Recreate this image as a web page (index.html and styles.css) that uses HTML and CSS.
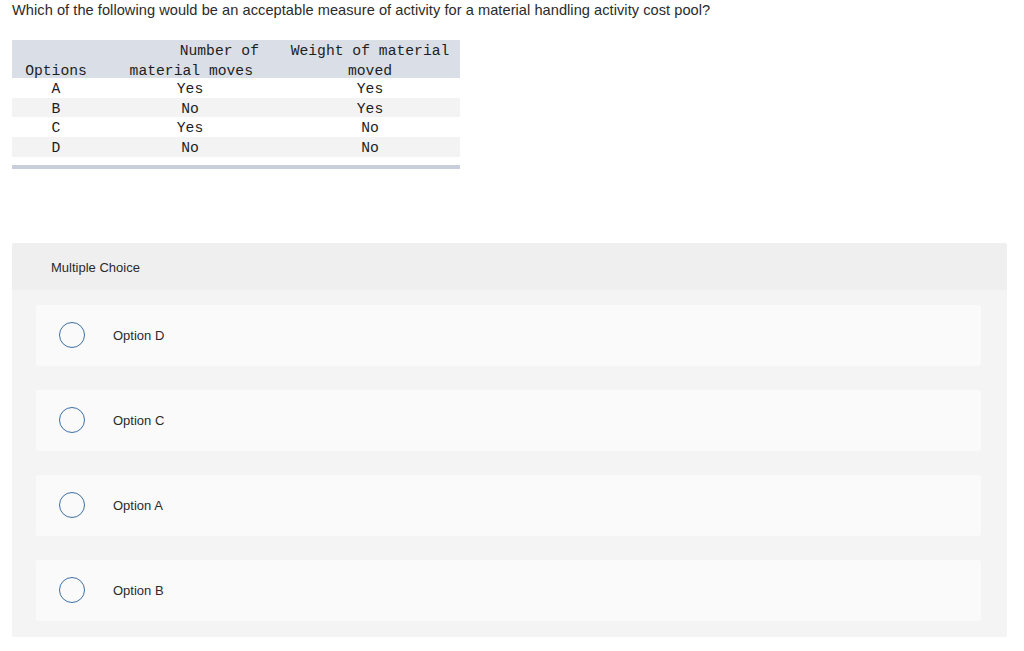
FILE: index.html
```html
<!DOCTYPE html>
<html lang="en">
<head>
<meta charset="utf-8">
<title>Question</title>
<link rel="stylesheet" href="styles.css">
</head>
<body>
<div class="page">
  <p class="question">Which of the following would be an acceptable measure of activity for a material handling activity cost pool?</p>

  <div class="table-wrap">
    <table class="data">
      <colgroup>
        <col class="w1">
        <col class="w2">
        <col class="w3">
      </colgroup>
      <thead>
        <tr>
          <th class="c1"><span class="l2">Options</span></th>
          <th class="c2"><span class="l1">Number of</span><span class="l2">material moves</span></th>
          <th class="c3"><span class="l1">Weight of material</span><span class="l2">moved</span></th>
        </tr>
      </thead>
      <tbody>
        <tr><td>A</td><td>Yes</td><td>Yes</td></tr>
        <tr class="alt"><td>B</td><td>No</td><td>Yes</td></tr>
        <tr><td>C</td><td>Yes</td><td>No</td></tr>
        <tr class="alt"><td>D</td><td>No</td><td>No</td></tr>
      </tbody>
    </table>
    <div class="table-bar"></div>
  </div>

  <section class="mc">
    <header class="mc-head">Multiple Choice</header>
    <div class="mc-body">
      <label class="choice"><span class="radio"></span><span class="choice-text">Option D</span></label>
      <label class="choice"><span class="radio"></span><span class="choice-text">Option C</span></label>
      <label class="choice"><span class="radio"></span><span class="choice-text">Option A</span></label>
      <label class="choice"><span class="radio"></span><span class="choice-text">Option B</span></label>
    </div>
  </section>
</div>
</body>
</html>
```

FILE: styles.css
```css
html, body {
  margin: 0;
  padding: 0;
  background: #ffffff;
}

.page {
  padding: 1px 17px 0 12px;
  font-family: "Liberation Sans", Arial, sans-serif;
  color: #2b2b2b;
}

.question {
  margin: 0;
  font-size: 14.6px;
  line-height: 18px;
  letter-spacing: 0.05px;
}

.table-wrap {
  width: 448px;
  margin-top: 21px;
}

.data {
  width: 448px;
  border-collapse: collapse;
  font-family: "Liberation Mono", "Courier New", monospace;
  font-size: 14.7px;
  color: #1e1e1e;
  table-layout: fixed;
}

.data .w1 { width: 88px; }
.data .w2 { width: 180px; }
.data .w3 { width: 180px; }

.data th {
  background: #d9dee7;
  font-weight: normal;
  line-height: 14px;
  height: 38px;
  padding: 4px 0 0 0;
  box-sizing: border-box;
  vertical-align: bottom;
}

.data th span { display: block; }
.data th .l1 { margin-bottom: 6px; }

.data .c1 { text-align: center; }
.data .c2 { text-align: right; padding-right: 27px; }
.data .c3 { text-align: center; }

.data .c2 .l1 { margin-right: -6px; }

.data td {
  text-align: center;
  height: 19.7px;
  line-height: 15.7px;
  padding: 4px 0 0 0;
  box-sizing: border-box;
}

.data tr.alt td {
  background: #f3f3f3;
}

.table-bar {
  height: 4px;
  margin-top: 8px;
  background: #c8cfdb;
}

.mc {
  margin-top: 74px;
  background: #f4f4f4;
  border-radius: 2px;
}

.mc-head {
  background: #efefef;
  height: 47px;
  display: flex;
  align-items: center;
  padding-left: 39px;
  padding-top: 2px;
  box-sizing: border-box;
  font-size: 13px;
  color: #2b2b2b;
  border-radius: 2px 2px 0 0;
}

.mc-body {
  display: flex;
  flex-direction: column;
  gap: 24px;
  padding: 15px 26px 16px 24px;
}

.choice {
  display: flex;
  align-items: center;
  height: 61px;
  background: #fafafa;
  border-radius: 3px;
  padding-left: 23px;
  padding-top: 1px;
  box-sizing: border-box;
}

.radio {
  width: 24px;
  height: 24px;
  border: 1.5px solid #3e6fa3;
  border-radius: 50%;
  flex: none;
  margin-right: 28px;
  margin-top: -1px;
}

.choice-text {
  font-size: 13px;
  color: #2b2b2b;
}
```
